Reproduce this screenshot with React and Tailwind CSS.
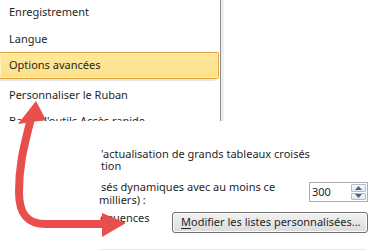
const MENU = [
  { label: "Enregistrement", h: "h-[27px]" },
  { label: "Langue", h: "h-[26px]" },
  { label: "Options avancées", h: "h-[27px]", active: true },
  { label: "Personnaliser le Ruban", h: "h-[29px]" },
  { label: "Barre d'outils Accès rapide", h: "h-[22px]" },
];

function RedArrow() {
  return (
    <svg
      className="pointer-events-none absolute left-0 top-0"
      width="375"
      height="252"
      viewBox="0 0 375 252"
    >
      <path
        d="M31 118 C26 140 19 160 19 192 C19 214 27 224 46 224 L104 224"
        fill="none"
        stroke="#e84e4b"
        strokeWidth="8"
        strokeLinejoin="round"
      />
      <polygon points="36,101 18,124 46,120" fill="#e84e4b" />
      <polygon points="102,213 102,237 126,223" fill="#e84e4b" />
    </svg>
  );
}

export default function App() {
  return (
    <div
      className="relative h-[252px] w-[375px] overflow-hidden bg-white text-[11px] text-[#1f1f1f]"
      style={{ fontFamily: '"Noto Sans", "Open Sans", sans-serif' }}
    >
      {/* sidebar fragment */}
      <div className="flex h-[121px] overflow-hidden">
        <div className="-mt-px flex w-[220px] shrink-0 flex-col">
          {MENU.map((item) =>
            item.active ? (
              <div key={item.label} className="flex shrink-0 flex-col">
                <div className="flex h-[27px] w-[219px] items-center rounded-r-[2px] border border-l-0 border-[#e2a23c] bg-gradient-to-b from-[#fee89c] to-[#fde088] pl-[9px] shadow-[inset_0_0_0_1px_#fff0b8]">
                  {item.label}
                </div>
                <div className="h-[2px] w-[215px] bg-[#e6e6e6]" />
              </div>
            ) : (
              <div
                key={item.label}
                className={`flex ${item.h} shrink-0 items-center whitespace-nowrap pl-[9px]`}
              >
                {item.label}
              </div>
            )
          )}
        </div>
        <div className="w-px shrink-0 bg-[#8c8c8c]" />
        <div className="w-[3px] shrink-0 bg-[#efefef]" />
      </div>

      {/* options fragment */}
      <div className="ml-[101px] mt-[27px] flex w-[267px] flex-col">
        <div className="leading-[12px]">
          <div>'actualisation de grands tableaux croisés</div>
          <div>tion</div>
        </div>
        <div className="mt-[8px] flex items-start justify-between">
          <div className="leading-[13px]">
            <div>sés dynamiques avec au moins ce</div>
            <div className="-ml-[2px]">milliers) :</div>
          </div>
          <div className="mt-[2px] flex h-[20px] w-[59px] items-center border border-[#abadb3] bg-white pl-[2px] pr-[1px]">
            <span className="flex-1">300</span>
            <div className="flex h-[16px] w-[15px] flex-col gap-px">
              <div className="flex flex-1 items-center justify-center rounded-[1px] border border-[#b5bcc7] bg-gradient-to-b from-[#f7f9fb] to-[#e3e8ee]">
                <svg width="7" height="4" viewBox="0 0 7 4">
                  <polygon points="3.5,0 7,4 0,4" fill="#4d6185" />
                </svg>
              </div>
              <div className="flex flex-1 items-center justify-center rounded-[1px] border border-[#b5bcc7] bg-gradient-to-b from-[#f7f9fb] to-[#e3e8ee]">
                <svg width="7" height="4" viewBox="0 0 7 4">
                  <polygon points="0,0 7,0 3.5,4" fill="#4d6185" />
                </svg>
              </div>
            </div>
          </div>
        </div>
        <div className="mt-[6px] flex items-start justify-between">
          <div className="-ml-px -mt-px leading-[13px]">équences</div>
          <button className="flex h-[21px] w-[196px] items-center whitespace-nowrap rounded-[3px] border border-[#707070] bg-gradient-to-b from-[#f2f2f2] to-[#dcdcdc] pl-[8px] text-[11px] text-[#1f1f1f] shadow-[inset_0_0_0_1px_#fcfcfc]">
            <span>
              <span className="underline decoration-1 underline-offset-2">M</span>odifier les listes personnalisées...
            </span>
          </button>
        </div>
        <div className="mt-[16px] h-px w-[265px] bg-[#e8e8e8]" />
      </div>

      <RedArrow />
    </div>
  );
}
